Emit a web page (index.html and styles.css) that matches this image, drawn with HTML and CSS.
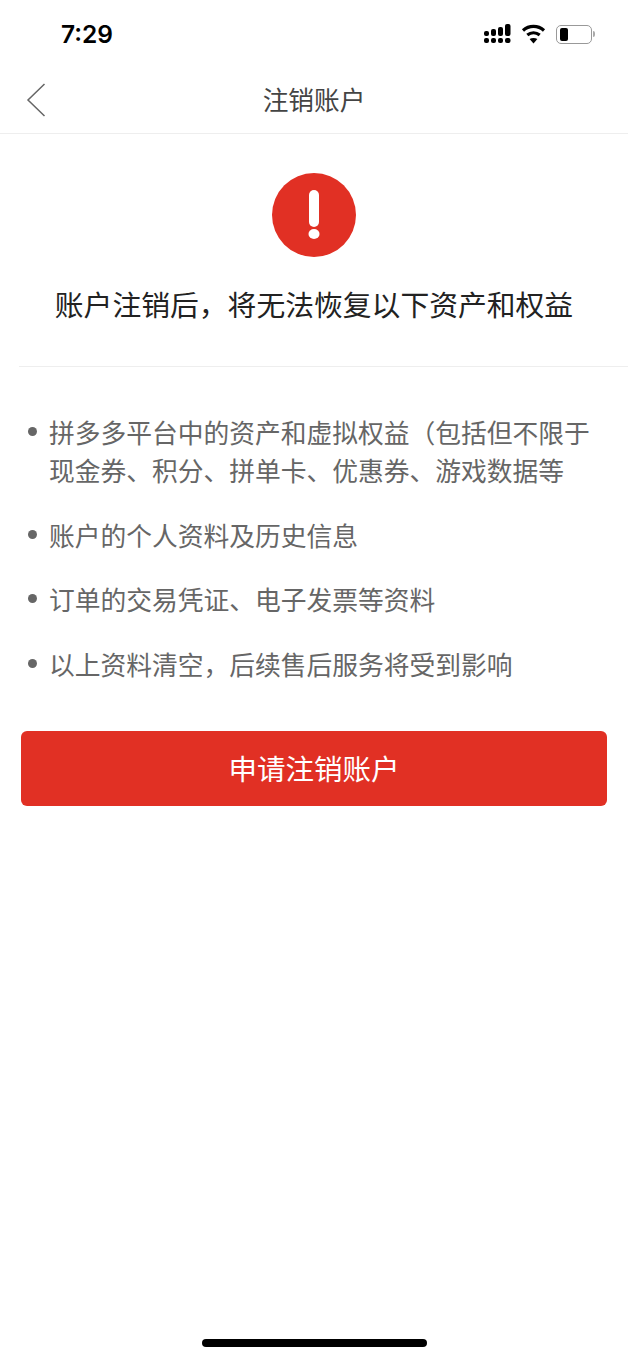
FILE: index.html
```html
<!DOCTYPE html>
<html lang="zh-CN">
<head>
  <meta charset="UTF-8">
  <meta name="viewport" content="width=device-width, initial-scale=1.0">
  <title>注销账户</title>
  <link rel="stylesheet" href="styles.css">
</head>
<body>
  <div class="page">
    <div class="status-bar">
      <span class="time">7:29</span>
      <div class="status-icons">
        <svg class="signal" width="27" height="20" viewBox="0 0 27 20" fill="#000">
          <rect x="0" y="7" width="5" height="5" rx="2"/>
          <rect x="7" y="5" width="5" height="7" rx="2"/>
          <rect x="14" y="3" width="5" height="9" rx="2"/>
          <rect x="21" y="0" width="5.5" height="12" rx="2"/>
          <rect x="0" y="14" width="5" height="5" rx="2"/>
          <rect x="7" y="14" width="5" height="5" rx="2"/>
          <rect x="14" y="14" width="5" height="5" rx="2"/>
          <rect x="21" y="14" width="5.5" height="5" rx="2"/>
        </svg>
        <svg class="wifi" width="25" height="20" viewBox="0 0 24 20" fill="none" stroke="#000" stroke-width="3.2">
          <path d="M1.5 6.500c6-5.400 15-5.400 21 0"/>
          <path d="M5.800 11c3.700-3 8.700-3 12.400 0"/>
          <path d="M12 19.500l-3.900-4.500c2.300-1.500 5.500-1.500 7.800 0z" fill="#000" stroke="none"/>
        </svg>
        <div class="battery">
          <div class="battery-body"><div class="battery-level"></div></div>
          <div class="battery-tip"></div>
        </div>
      </div>
    </div>

    <div class="nav-bar">
      <svg class="back" width="20" height="34" viewBox="0 0 20 34" fill="none" stroke="#666" stroke-width="1.5">
        <path d="M18.500 1L2 17l16.500 16"/>
      </svg>
      <h1 class="nav-title">注销账户</h1>
    </div>

    <div class="warning">
      <svg class="warning-icon" width="84" height="84" viewBox="0 0 84 84">
        <circle cx="42" cy="42" r="42" fill="#e13024"/>
        <rect x="37" y="17" width="10" height="37" rx="5" fill="#fff"/>
        <ellipse cx="42" cy="61" rx="5.500" ry="5" fill="#fff"/>
      </svg>
      <h2 class="warning-title">账户注销后，将无法恢复以下资产和权益</h2>
    </div>

    <ul class="rights">
      <li>拼多多平台中的资产和虚拟权益（包括但不限于现金券、积分、拼单卡、优惠券、游戏数据等</li>
      <li>账户的个人资料及历史信息</li>
      <li>订单的交易凭证、电子发票等资料</li>
      <li>以上资料清空，后续售后服务将受到影响</li>
    </ul>

    <button class="apply-btn">申请注销账户</button>

    <div class="home-indicator"></div>
  </div>
</body>
</html>
```

FILE: styles.css
```css
* {
  box-sizing: border-box;
}

body {
  margin: 0;
  padding: 0;
  background-color: #fff;
  font-family: "Noto Sans CJK SC", "Liberation Sans", sans-serif;
}

.page {
  display: flex;
  flex-direction: column;
  height: 1359px;
  overflow: hidden;
}

.status-bar {
  display: flex;
  justify-content: space-between;
  align-items: center;
  height: 68px;
  padding: 0 33px 0 61px;
}

.time {
  font-family: Inter, "Liberation Sans", sans-serif;
  font-size: 24.500px;
  font-weight: 600;
  color: #000;
}

.status-icons {
  display: flex;
  align-items: center;
  gap: 10px;
}

.battery {
  display: flex;
  align-items: center;
  gap: 1px;
}

.battery-body {
  width: 36px;
  height: 19px;
  padding: 2px 3px;
  border: 1.500px solid #999;
  border-radius: 5px;
}

.battery-level {
  width: 8px;
  height: 100%;
  background-color: #000;
  border-radius: 2px;
}

.battery-tip {
  width: 2px;
  height: 6px;
  background-color: #aaa;
  border-radius: 0 2px 2px 0;
}

.nav-bar {
  position: relative;
  display: flex;
  justify-content: center;
  align-items: center;
  height: 66px;
  padding-bottom: 4px;
  border-bottom: 1px solid #eee;
}

.back {
  position: absolute;
  left: 26px;
  top: 15px;
}

.nav-title {
  margin: 0;
  font-size: 25.700px;
  font-weight: 400;
  color: #444;
}

.warning {
  display: flex;
  flex-direction: column;
  align-items: center;
  height: 233px;
  margin-left: 19px;
  padding: 39px 19px 0 0;
  border-bottom: 1px solid #eee;
}

.warning-title {
  margin: 23px 0 0;
  font-size: 28.800px;
  line-height: 48px;
  font-weight: 400;
  color: #222;
  white-space: nowrap;
}

.rights {
  list-style: none;
  margin: 0;
  padding: 46px 34px 0 49px;
}

.rights li {
  position: relative;
  margin-bottom: 26.600px;
  font-size: 25.750px;
  line-height: 38px;
  color: #666;
}

.rights li::before {
  content: "";
  position: absolute;
  left: -21px;
  top: 14px;
  width: 9px;
  height: 9px;
  background-color: #666;
  border-radius: 50%;
}

.apply-btn {
  display: block;
  width: 586px;
  height: 75px;
  margin: 22px 0 0 21px;
  padding: 0 0 2px;
  font-family: inherit;
  font-size: 28.500px;
  color: #fff;
  background-color: #e13024;
  border: none;
  border-radius: 6px;
}

.home-indicator {
  width: 225px;
  height: 8px;
  margin: auto auto 12px;
  background-color: #000;
  border-radius: 4px;
}
```
